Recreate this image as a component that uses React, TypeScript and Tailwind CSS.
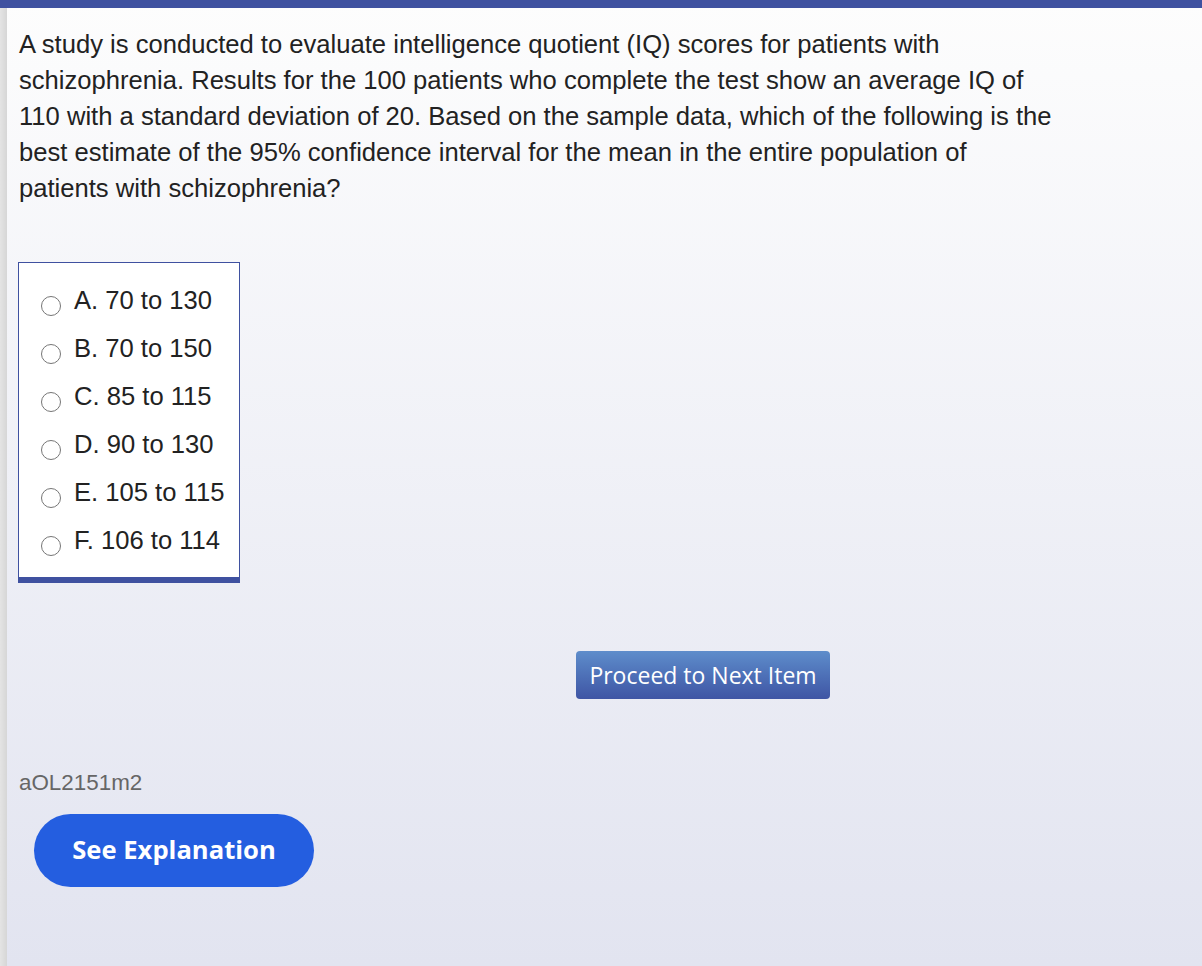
export default function App() {
  const options = [
    "A. 70 to 130",
    "B. 70 to 150",
    "C. 85 to 115",
    "D. 90 to 130",
    "E. 105 to 115",
    "F. 106 to 114",
  ];

  return (
    <div className="flex min-h-[966px] flex-col bg-gradient-to-b from-[#fdfdfd] to-[#e2e4f0] font-['Liberation_Sans',Arial,sans-serif]">
      <div className="h-[8px] w-full bg-[#3f51a0]" />
      <div className="flex flex-1">
        <div className="w-[7px] bg-gradient-to-r from-[#e4e4e4] to-[#d6d6d6]" />
        <div className="flex-1 pl-[12px] pt-[18px]">
          <p className="max-w-[1040px] text-[25.6px] leading-[36px] text-[#222]">
            A study is conducted to evaluate intelligence quotient (IQ) scores for patients with
            schizophrenia. Results for the 100 patients who complete the test show an average IQ of
            110 with a standard deviation of 20. Based on the sample data, which of the following is the
            best estimate of the 95% confidence interval for the mean in the entire population of
            patients with schizophrenia?
          </p>

          <div className="ml-[-1px] mt-[56px] w-[222px] border border-b-[6px] border-[#3f51a0] bg-white py-[13px] pl-[22px]">
            {options.map((opt) => (
              <label key={opt} className="flex h-[48px] items-center text-[25.6px] text-[#222]">
                <span className="mt-[11px] block h-[20px] w-[20px] shrink-0 rounded-full border-[1.5px] border-[#767676] bg-white" />
                <span className="ml-[13px]">{opt}</span>
              </label>
            ))}
          </div>

          <div className="mt-[68px] pl-[557px]">
            <button
              type="button"
              className="h-[48px] w-[254px] rounded-[4px] bg-gradient-to-b from-[#5e8dcb] to-[#3f55a4] font-['Open_Sans',sans-serif] text-[23px] text-white"
            >
              Proceed to Next Item
            </button>
          </div>

          <p className="mt-[70px] text-[22.4px] leading-[28px] text-[#666]">aOL2151m2</p>

          <button
            type="button"
            className="ml-[15px] mt-[17px] h-[73px] w-[280px] rounded-full bg-[#245ee0] font-['Open_Sans',sans-serif] text-[25.6px] font-bold text-white"
          >
            See Explanation
          </button>
        </div>
      </div>
    </div>
  );
}
